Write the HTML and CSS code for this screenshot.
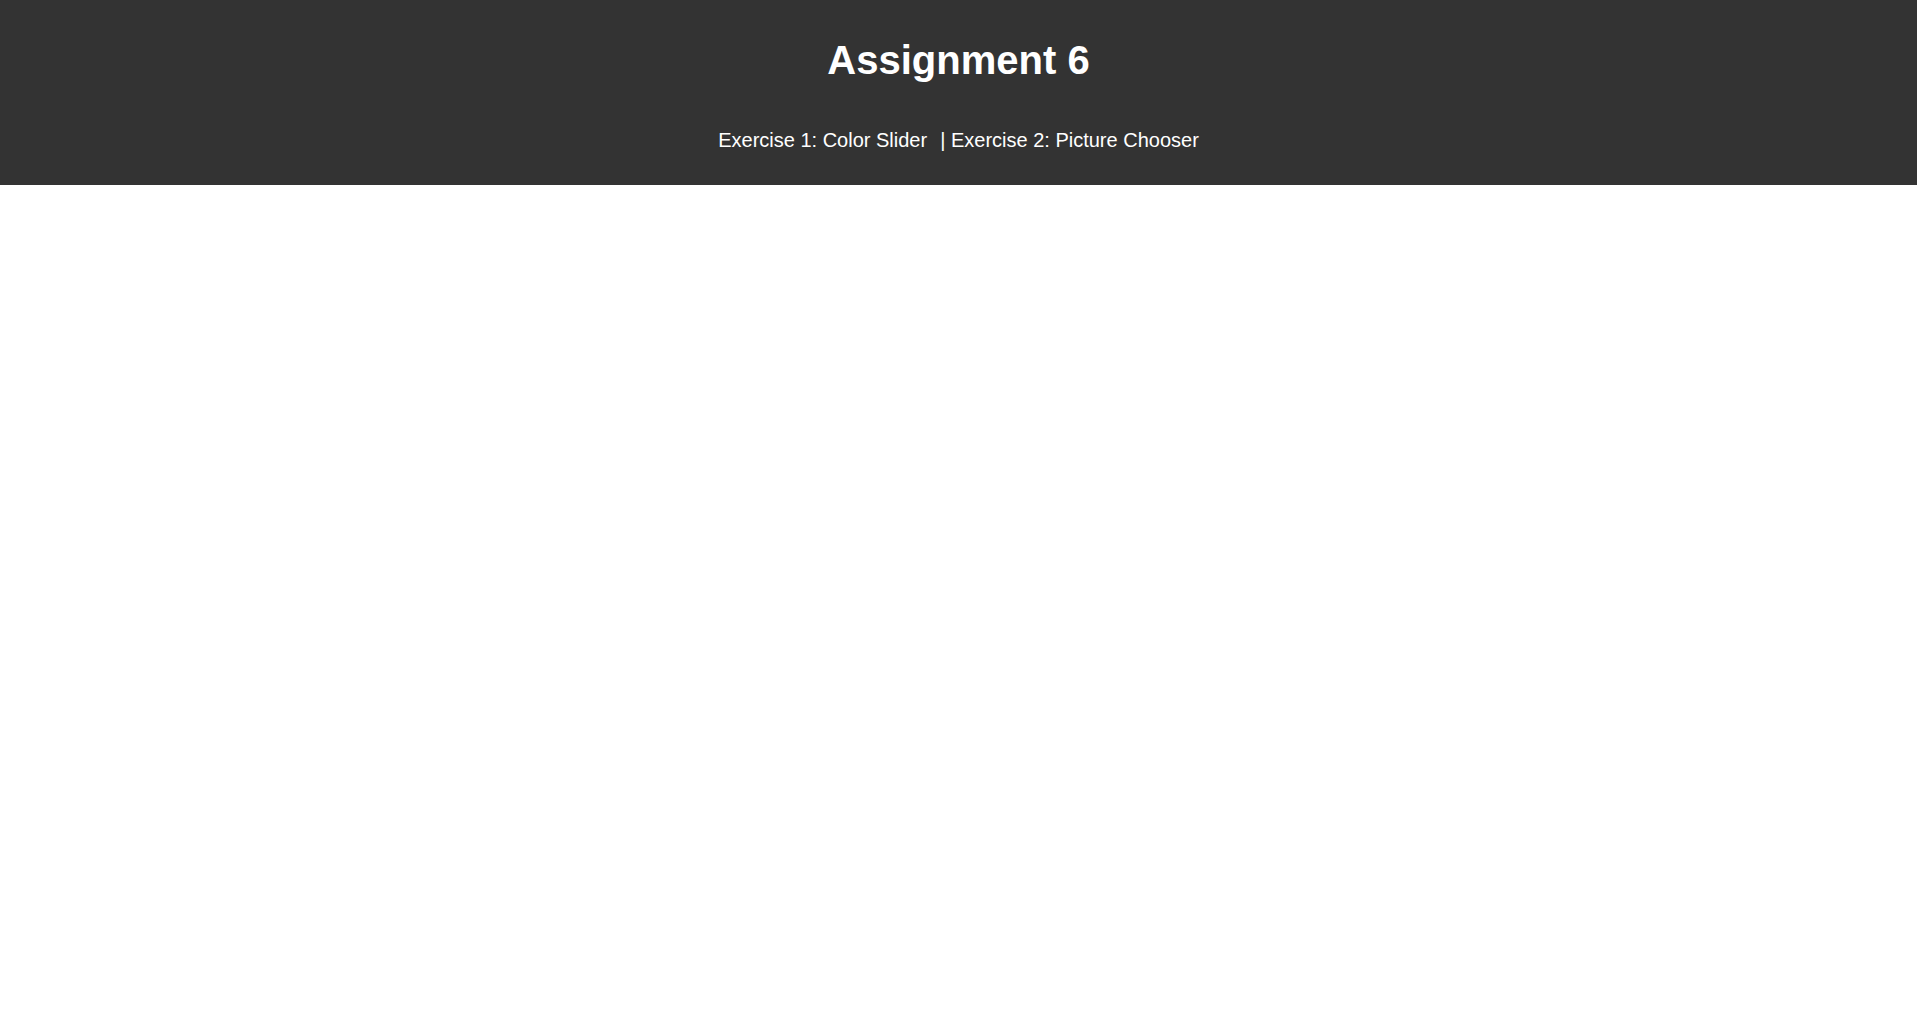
FILE: index.html
```html
<!DOCTYPE html>
<html lang="en">
<head>
<meta charset="utf-8">
<title>Assignment 6</title>
<link rel="stylesheet" href="styles.css">
</head>
<body>
<header class="site-header">
  <h1 class="site-title">Assignment 6</h1>
  <nav class="site-nav">
    <a class="nav-link" href="#">Exercise 1: Color Slider</a><span class="nav-sep">|</span> <a class="nav-link" href="#">Exercise 2: Picture Chooser</a>
  </nav>
</header>
<main class="content"></main>
</body>
</html>
```

FILE: styles.css
```css
html, body {
  margin: 0;
  padding: 0;
  background: #ffffff;
}
body {
  font-family: "Liberation Sans", Arial, sans-serif;
}
.site-header {
  background: #333333;
  color: #ffffff;
  text-align: center;
  padding: 37px 0 33px;
}
.site-title {
  margin: 0;
  font-size: 40px;
  font-weight: bold;
  line-height: 46px;
}
.site-nav {
  margin-top: 46px;
  font-size: 20px;
  line-height: 23px;
}
.nav-link {
  color: #ffffff;
  text-decoration: none;
}
.nav-sep {
  margin-left: 13px;
}
```
